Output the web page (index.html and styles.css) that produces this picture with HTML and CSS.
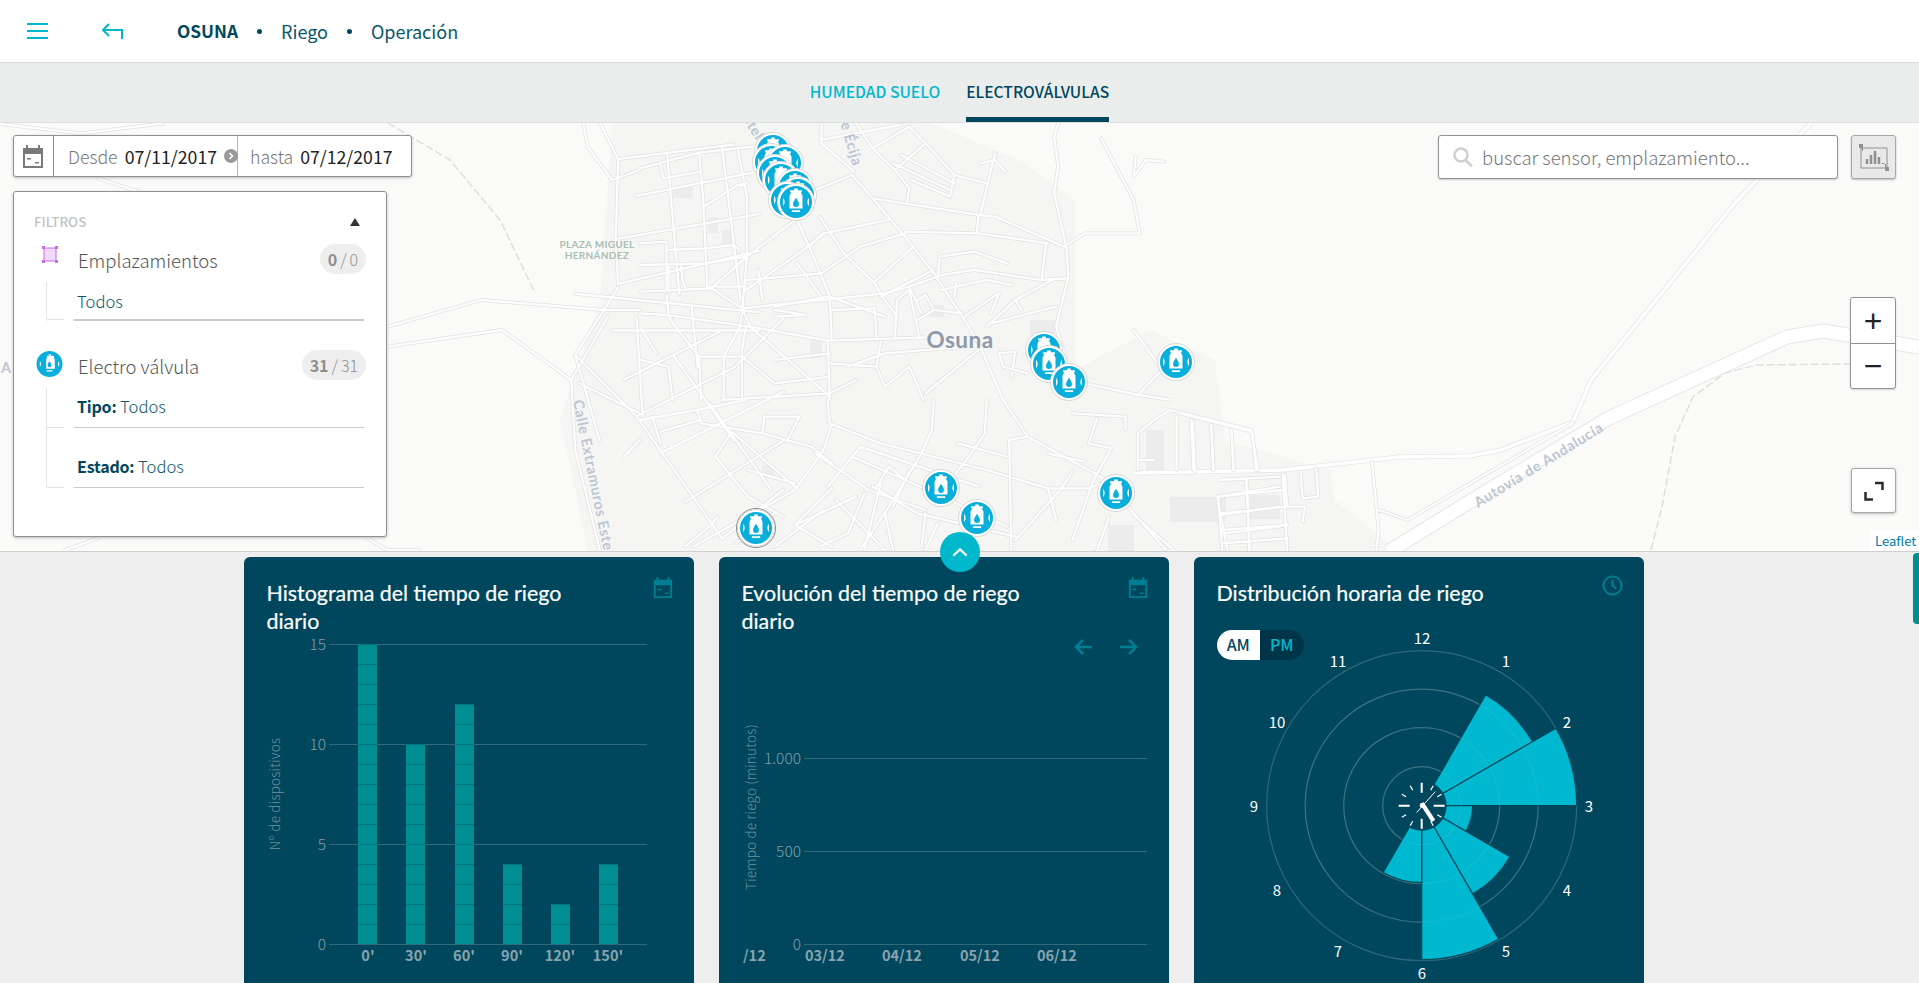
FILE: index.html
```html
<!DOCTYPE html>
<html lang="es">
<head>
<meta charset="utf-8">
<title>Osuna · Riego · Operación</title>
<link rel="stylesheet" href="styles.css">
</head>
<body>
<header class="topbar">
  <button class="menu-btn" aria-label="Menú"><i></i><i></i><i></i></button>
  <svg class="back-icon" viewBox="102 22 21 18"><path d="M109 24L103 30L109 36M103 30H122V39"/></svg>
  <nav class="crumbs">
    <b>OSUNA</b><i class="dot"></i><span>Riego</span><i class="dot"></i><span>Operación</span>
  </nav>
</header>
<div class="tabs">
  <a class="tab">HUMEDAD SUELO</a>
  <a class="tab tab-active">ELECTROVÁLVULAS</a>
</div>

<section class="map">
  <svg class="map-canvas" viewBox="0 123 1919 428" preserveAspectRatio="none">
    <defs>
      <g id="roads">
        <g transform="translate(640 100) scale(.408 .3333)">
          <path d="M0 205L145 158L290 138M145 158L155 300L160 435L165 560M50 195L58 235L148 215M240 150L262 290L262 470L250 640L245 680L205 770L205 900M155 320L240 255L262 250M262 470L380 360M262 470L175 565L0 575M175 565L250 625L270 680L460 722L700 712M0 640L65 645L270 680M65 585L70 645L80 670L145 770L150 900M0 430L65 425L65 570M0 495L160 490M65 450L160 445L230 435L262 470M100 495L105 545L115 570M260 570L390 460L450 400M250 625L450 600L600 580L660 560L740 525L820 510L980 540L1045 535"/>
          <path d="M385 360L415 440L465 590L470 720M440 350L500 460L575 550L600 600M415 440L450 400L610 360M445 520L540 440L650 400M575 545L670 440M590 590L720 510M430 270L520 225L570 295L650 410L720 520L790 650L830 730L890 900M445 70L445 130L525 215M530 70L570 145L625 210L660 265L655 305M445 120L570 90L640 75M625 210L700 130L770 225L760 290L665 240M570 145L660 80L700 130M570 295L830 345L870 350L1040 440M650 395L830 400L1000 430M830 345L825 400M870 160L835 340M835 190L870 180L895 215M770 225L850 250M620 190L760 270M640 165L770 250"/>
          <path d="M1025 70L1015 110L1025 200L1015 280L1045 440L1050 530L1020 680L1050 800M1040 440L1090 400L1225 400L1210 300L1130 115M1215 170L1210 230L1240 180L1285 185M735 470L820 455L900 490M735 470L730 530M995 430L985 535M740 570L850 540L910 555M775 550L770 590M630 600L660 570L685 715M630 600L625 710M680 600L700 585L720 630L680 660M795 650L880 580L860 640M850 680L920 600L1010 540M920 600L935 630M860 670L1020 620M575 625L580 715M330 630L405 645L330 650M460 720L465 900M590 725L580 800L600 860L660 800L695 900M510 800L600 760L800 740M700 880L830 750M880 760L890 800L950 820M880 760L920 755L910 830M260 680L250 750L250 900M270 680L465 890M210 770L250 770M1090 850L1220 885L1280 810L1210 690M1220 885L1300 900M465 880L200 900"/>
          <path d="M160 490L262 470M262 540L445 520M70 500L70 570M165 560L260 560M330 620L460 590M465 590L600 650M470 630L575 625M600 600L630 650M720 630L790 640M660 560L690 640M385 490L450 600M300 600L290 510M0 680L40 760M145 770L205 770M250 770L330 850M330 780L465 760M465 790L580 800M330 850L465 830M0 780L70 800M70 800L80 900M530 840L465 880M1000 800L1090 850"/>
        </g>
        <g transform="translate(640 400) scale(.408 .3333)">
          <path d="M30 50L50 130M50 95L150 60M0 60L140 30L260 0M140 30L150 70L300 100L420 140L470 190M300 100L305 50L390 50L360 125M225 95L185 170L265 290L350 350M265 210L380 250M225 95L380 260M460 0L465 70L590 130L850 210L1000 265L1100 265L1130 250M470 70L450 150L380 270L130 440M540 140L520 170L650 240L900 380M540 140L830 260M720 0L715 90L690 160L610 320L540 450M850 0L845 100L800 180L760 240M905 120L910 450"/>
          <path d="M470 265L380 375L530 290M550 280L510 400L440 440M570 260L680 340L920 410M890 0L950 110L1130 230L1290 450M1120 55L1100 130L1155 145L1110 245L1060 420M1060 40L1190 50L1190 90M1060 215L1030 270L920 420M1260 60L1220 100L1220 210M1260 60L1300 30L1500 90L1510 210M1315 50L1315 210M1355 65L1360 215M1400 80L1405 210M1450 100L1455 210M1220 180L1260 180M1420 240L1568 230M1415 290L1568 260M1415 290L1440 453M1485 240L1495 453M1420 345L1568 320M1430 400L1568 380M1210 345L1310 453M1120 453L1150 350M610 200L580 260M590 250L550 450M730 370L700 450M110 440L170 380L190 350"/>
          <path d="M430 160L560 270L700 330M520 170L460 260M610 200L650 240M660 215L620 320M780 130L900 170M1000 160L1090 185M950 110L905 120M1000 265L1020 360M700 340L690 440M800 370L790 450M600 340L620 450M480 300L560 400L600 450M380 375L470 440M330 440L450 330M235 430L330 340M1180 240L1190 290"/>
        </g>
        <g transform="translate(1180 330) scale(.4464 .3333)">
          <path d="M430 395L445 600L440 660M445 540L510 570L880 280M150 450L155 660M230 430L240 660M85 500L230 480M90 550L240 530M95 600L240 585M95 640L240 625M85 500L95 660M270 425L275 505L310 500L305 415M0 250L160 305L175 420M25 270L30 420M70 285L75 420M115 300L120 420M235 435L240 530L280 530L275 575"/>
        </g>
        <g transform="scale(.408 .3333)">
          <path d="M0 372L200 400L400 370M240 535L340 575M1430 370L1440 440L1500 540M1500 540L1568 510"/>
        </g>
        <g transform="translate(0 300) scale(.408 .3333)">
          <path d="M950 80L1180 0L1480 30L1568 30M950 140L1230 90L1400 240L1490 50M1400 240L1410 450L1470 750M1420 250L1568 340M240 715L160 750M900 715L950 750L1025 750M1530 470L1568 420"/>
        </g>
        <g transform="scale(1.224)">
          <path d="M505 130L503 195L505 232M505 130L600 118M520 160L620 140M505 195L620 175M545 125L555 240M590 120L605 245M505 232L620 205M470 240L620 255M470 290L505 235M470 290L520 340L590 440M470 290L490 360M520 340L600 300L640 260M540 370L640 320M560 410L640 360M590 440L640 400M525 340L520 260M570 300L565 250M490 100L505 130M500 270L620 270M510 310L590 270M550 290L600 360M580 330L630 400"/>
        </g>
      </g>
      <path id="arterial" d="M1134 473L1283 470L1399 457L1470 456L1501 450L1573 422L1591 380L1735 203L1811 123"/>
      <path id="motorway" d="M1388 552L1492 488L1609 418L1787 337L1823 331L1919 347"/>
      <symbol id="valve" viewBox="-19 -20 38 40" overflow="visible">
        <circle r="18.500" class="valve-rim"/>
        <circle r="16" class="valve-disc"/>
        <g transform="scale(1.18)">
          <g class="valve-glyph">
            <path d="M-1.500 -11.500h3v1.500h3.500v1.800h-1l1.500 3v10.700h-11v-10.700l1.500-3h-1v-1.800h3.500z"/>
            <rect x="-3.500" y="7" width="7" height="1.500"/>
            <path d="M-11 -3.500a5 5 0 0 1 0 7zM11 -3.500a5 5 0 0 0 0 7z"/>
          </g>
          <path class="valve-drop" d="M0-3.500c1.300 2.200 2.500 3.700 2.500 5.200a2.500 2.500 0 0 1-5 0c0-1.500 1.200-3 2.500-5.200z"/>
        </g>
      </symbol>
    </defs>
    <rect x="0" y="123" width="1919" height="428" class="map-bg"/>
    <path class="map-urban" d="M612 123L930 123L1020 160L1075 200L1075 370L1150 330L1215 360L1225 440L1330 470L1335 500L1410 560L590 560L560 420L600 300z"/>
    <g class="map-blocks">
      <rect x="673" y="187" width="20" height="11"/><rect x="722" y="230" width="10" height="16"/><rect x="708" y="217" width="10" height="16"/><rect x="930" y="305" width="14" height="12"/><rect x="810" y="340" width="12" height="18"/><rect x="1030" y="320" width="25" height="25"/><rect x="1250" y="495" width="30" height="24"/><rect x="1170" y="497" width="56" height="25"/><rect x="1146" y="430" width="18" height="40"/><rect x="1108" y="525" width="26" height="26"/><rect x="762" y="465" width="12" height="12"/>
    </g>
    <path class="road-rail" d="M388 123L450 160L500 220L535 293M1651 550L1662 507L1675 437L1693 397L1725 373L1756 365L1850 364"/>
    <use href="#motorway" class="motorway-casing"/>
    <use href="#motorway" class="motorway-inner"/>
    <use href="#arterial" class="arterial-casing"/>
    <use href="#arterial" class="arterial-inner"/>
    <use href="#roads" class="roads-casing"/>
    <use href="#roads" class="roads-inner"/>
    <text x="960" y="348" class="lbl-town">Osuna</text>
    <text x="597" y="248" class="lbl-park">PLAZA MIGUEL</text>
    <text x="597" y="259" class="lbl-park">HERNÁNDEZ</text>
    <text transform="translate(573 401) rotate(78.500)" class="lbl-road">Calle Extramuros Este</text>
    <text transform="translate(1478 508) rotate(-31.500)" class="lbl-road">Autovía de Andalucía</text>
    <text transform="translate(838 115) rotate(74)" class="lbl-road">de Écija</text>
    <text transform="translate(738 112) rotate(58)" class="lbl-road">Estela</text>
    <text x="1" y="373" class="lbl-road">A</text>
    <use href="#valve" x="754" y="131" width="38" height="40"/>
    <use href="#valve" x="752" y="142" width="38" height="40"/>
    <use href="#valve" x="766" y="143" width="38" height="40"/>
    <use href="#valve" x="756" y="153" width="38" height="40"/>
    <use href="#valve" x="762" y="160" width="38" height="40"/>
    <use href="#valve" x="776" y="167" width="38" height="40"/>
    <use href="#valve" x="779" y="175" width="38" height="40"/>
    <use href="#valve" x="768" y="180" width="38" height="40"/>
    <use href="#valve" x="777" y="182" width="38" height="40"/>
    <use href="#valve" x="1025" y="330" width="38" height="40"/>
    <use href="#valve" x="1030" y="344" width="38" height="40"/>
    <use href="#valve" x="1050" y="362" width="38" height="40"/>
    <use href="#valve" x="1157" y="342" width="38" height="40"/>
    <use href="#valve" x="922" y="468" width="38" height="40"/>
    <use href="#valve" x="958" y="498" width="38" height="40"/>
    <use href="#valve" x="1097" y="473" width="38" height="40"/>
    <circle cx="756" cy="528" r="19.500" class="valve-outline"/>
    <use href="#valve" x="737" y="508" width="38" height="40"/>
  </svg>

  <div class="range">
    <span class="range-icon">
      <svg viewBox="0 0 24 24"><path fill-rule="evenodd" d="M2 4h3V1h2v3h10V1h2v3h3v20H2zM4 10v12h16V10zM6 14h4v1.500H6zM14 18h4v1.500h-4z"/></svg>
    </span>
    <span class="range-cell range-from"><em>Desde</em>07/11/2017<i class="range-arrow"><svg viewBox="0 0 14 14"><path d="M5.500 4L8.500 7L5.500 10"/></svg></i></span>
    <span class="range-cell"><em>hasta</em>07/12/2017</span>
  </div>

  <aside class="filters">
    <div class="filters-head"><span>FILTROS</span><i class="tri"></i></div>
    <div class="f-row">
      <span class="f-icon">
        <svg class="poly-icon" viewBox="0 0 16 17"><rect x="2" y="2" width="12" height="13"/><path d="M0 0h3v3H0zM13 0h3v3h-3zM0 14h3v3H0zM13 14h3v3h-3z"/></svg>
      </span>
      <span class="f-name">Emplazamientos</span>
      <span class="badge"><b>0</b><s>/</s>0</span>
    </div>
    <div class="f-sub">
      <div class="f-item f-item-strong">Todos</div>
    </div>
    <div class="f-row f-row-gap">
      <span class="f-icon">
        <svg class="valve-mini" viewBox="-14 -14 28 28"><circle r="13.500" class="valve-disc"/><g class="valve-glyph"><path d="M-1.500 -10h3v1.500h3v1.500l1 2.500v9.500h-9v-9.500l1-2.500v-1.500h3z"/><rect x="-3" y="6.500" width="6" height="1.300"/><path d="M-10 -3a4.500 4.500 0 0 1 0 6zM10 -3a4.500 4.500 0 0 0 0 6z"/></g><path class="valve-drop" d="M0-3c1 1.800 2 3 2 4.300a2 2 0 0 1-4 0c0-1.300 1-2.500 2-4.300z"/></svg>
      </span>
      <span class="f-name">Electro válvula</span>
      <span class="badge"><b>31</b><s>/</s>31</span>
    </div>
    <div class="f-sub">
      <div class="f-item"><b>Tipo:</b> Todos</div>
      <div class="f-item"><b>Estado:</b> Todos</div>
    </div>
  </aside>

  <div class="search">
    <svg class="search-icon" viewBox="0 0 20 20"><circle cx="8" cy="8" r="6.500"/><path d="M12.500 13L19 19.500"/></svg>
    <span>buscar sensor, emplazamiento...</span>
  </div>
  <button class="tool-btn" aria-label="Gráficas">
    <svg viewBox="0 0 30 27"><path class="tool-frame" d="M2 4H28V24H2z"/><path class="tool-bars" d="M8 20V15M12 20V11M16 20V7M20 20V13M24 20V19"/><path class="tool-tips" d="M0 0h4v7H3V4H0zM30 27h-4v-7h1v3h3z"/></svg>
  </button>
  <div class="zoom-ctrl">
    <button>+</button>
    <button>−</button>
  </div>
  <button class="expand-btn" aria-label="Pantalla completa">
    <svg viewBox="0 0 20 20"><path d="M11 2H18.500V9M1.500 11V18.500H9"/></svg>
  </button>
  <a class="leaflet">Leaflet</a>
  <button class="collapse-btn" aria-label="Plegar">
    <svg viewBox="0 0 18 10"><path d="M1.500 8.500L9 1.500L16.500 8.500"/></svg>
  </button>
</section>

<main class="board">
  <article class="card">
    <div class="card-head">
      <h2>Histograma del tiempo de riego diario</h2>
      <svg class="card-icon" viewBox="0 0 24 24"><path fill-rule="evenodd" d="M2 4h3V1h2v3h10V1h2v3h3v20H2zM4 10v12h16V10zM6 14h4v1.500H6zM14 18h4v1.500h-4z"/></svg>
    </div>
    <svg class="chart" viewBox="244 637 450 346">
      <defs>
        <pattern id="units" patternUnits="userSpaceOnUse" x="0" y="644" width="10" height="20">
          <rect width="10" height="20" class="bar-fill"/><rect width="10" height="1" class="bar-unit"/>
        </pattern>
      </defs>
      <g class="grid">
        <path d="M329 644.500H647M329 744.500H647M329 844.500H647M329 944.500H647"/>
      </g>
      <g class="axis-y">
        <text x="326" y="650">15</text><text x="326" y="750">10</text><text x="326" y="850">5</text><text x="326" y="950">0</text>
      </g>
      <g class="bars" fill="url(#units)">
        <rect x="358" y="644" width="19" height="300"/>
        <rect x="406" y="744" width="19" height="200"/>
        <rect x="455" y="704" width="19" height="240"/>
        <rect x="503" y="864" width="19" height="80"/>
        <rect x="551" y="904" width="19" height="40"/>
        <rect x="599" y="864" width="19" height="80"/>
      </g>
      <g class="axis-x">
        <text x="368" y="961">0'</text><text x="416" y="961">30'</text><text x="464" y="961">60'</text><text x="512" y="961">90'</text><text x="560" y="961">120'</text><text x="608" y="961">150'</text>
      </g>
      <text class="axis-title" transform="translate(280 794) rotate(-90)">Nº de dispositivos</text>
      <text class="axis-title" x="480" y="995">Tiempo de riego</text>
    </svg>
  </article>

  <article class="card">
    <div class="card-head">
      <h2>Evolución del tiempo de riego diario</h2>
      <svg class="card-icon" viewBox="0 0 24 24"><path fill-rule="evenodd" d="M2 4h3V1h2v3h10V1h2v3h3v20H2zM4 10v12h16V10zM6 14h4v1.500H6zM14 18h4v1.500h-4z"/></svg>
    </div>
    <svg class="chart" viewBox="719 637 450 346">
      <g class="grid"><path d="M804 758.500H1147M804 851.500H1147M804 944.500H1147"/></g>
      <g class="axis-y">
        <text x="801" y="764">1.000</text><text x="801" y="857">500</text><text x="801" y="950">0</text>
      </g>
      <g class="axis-x axis-x-start">
        <text x="743" y="961">/12</text><text x="805" y="961">03/12</text><text x="882" y="961">04/12</text><text x="960" y="961">05/12</text><text x="1037" y="961">06/12</text>
      </g>
      <text class="axis-title" transform="translate(756 807) rotate(-90)">Tiempo de riego (minutos)</text>
      <path class="nav-arrow" d="M1092 647H1077M1083 640L1076 647L1083 654M1120 647H1135M1129 640L1136 647L1129 654"/>
    </svg>
  </article>

  <article class="card">
    <div class="card-head">
      <h2>Distribución horaria de riego</h2>
      <svg class="card-icon card-icon-clock" viewBox="0 0 22 22"><circle cx="11" cy="11" r="9.500"/><path d="M11 5V11.500L15 14"/></svg>
      <div class="ampm"><span class="ampm-on">AM</span><span>PM</span></div>
    </div>
    <svg class="chart" viewBox="1194 637 450 346">
      <g transform="translate(1421.700 805.700)">
        <g class="rings">
          <circle r="155"/><circle r="116.500"/><circle r="78"/><circle r="39"/>
        </g>
        <g class="wedges">
          <path d="M0 0L64 -110.900A128 128 0 0 1 110.900 -64Z"/>
          <path d="M0 0L134.200 -77.500A155 155 0 0 1 155 0Z"/>
          <path d="M0 0L51 0A51 51 0 0 1 44.200 25.500Z"/>
          <path d="M0 0L88.300 51A102 102 0 0 1 51 88.300Z"/>
          <path d="M0 0L77 133.400A154 154 0 0 1 0 154Z"/>
          <path d="M0 0L0 77A77 77 0 0 1 -38.500 66.700Z"/>
        </g>
        <g class="rings-over">
          <circle r="116.500"/><circle r="78"/><circle r="39"/>
        </g>
        <circle r="25" class="hub"/>
        <g class="ticks-major"><path d="M0 -23V-13M23 0H12M0 23V13M-23 0H-12"/></g>
        <g class="ticks-minor"><path d="M11.500 -19.900L9 -15.600M19.900 -11.500L15.600 -9M19.900 11.500L15.600 9M11.500 19.900L9 15.600M-11.500 19.900L-9 15.600M-19.900 11.500L-15.600 9M-19.900 -11.500L-15.600 -9M-11.500 -19.900L-9 -15.600"/></g>
        <path class="hand-thin" d="M-5 6.700L13.500 -14"/>
        <path class="hand-thick" d="M-2 -2L2 -3.500L13.500 14L10 16.500Z"/>
        <circle r="2" class="hand-pin"/>
      </g>
      <g class="hours">
        <text x="1422" y="637">12</text><text x="1506" y="660">1</text><text x="1567" y="721">2</text><text x="1589" y="805">3</text><text x="1567" y="889">4</text><text x="1506" y="950">5</text><text x="1422" y="972">6</text><text x="1338" y="950">7</text><text x="1277" y="889">8</text><text x="1254" y="805">9</text><text x="1277" y="721">10</text><text x="1338" y="660">11</text>
      </g>
    </svg>
  </article>
  <span class="side-thumb"></span>
</main>
</body>
</html>
```

FILE: styles.css
```css
* { box-sizing: border-box; }
html, body { margin: 0; height: 983px; overflow: hidden; }
body {
  font-family: "Noto Sans CJK SC", "Source Sans Pro", "Noto Sans", sans-serif;
  color: #00475d;
  background: #eeeeee;
}
button { font: inherit; padding: 0; border: 0; background: none; color: inherit; }

/* top bar */
.topbar {
  display: flex; align-items: center; height: 63px;
  padding: 0 0 0 27px;
  background: #fff; border-bottom: 1px solid #dcdede;
}
.menu-btn { display: flex; flex-direction: column; gap: 5px; width: 21px; }
.menu-btn i { display: block; height: 2px; background: #00b8cc; }
.back-icon { width: 21px; height: 18px; margin-left: 54px; fill: none; stroke: #00b8cc; stroke-width: 2; }
.crumbs { display: flex; align-items: center; margin-left: 54px; font-size: 18px; line-height: 26px; color: #0a566c; }
.crumbs b { font-size: 17.300px; font-weight: 700; color: #00475d; }
.crumbs .dot { width: 5px; height: 5px; margin: 0 19px; border-radius: 50%; background: #00475d; }

/* tabs */
.tabs {
  display: flex; justify-content: center; gap: 26px; height: 60px;
  background: #ebeded; border-bottom: 1px solid #dcdee0;
}
.tab {
  display: block; height: 59px; padding-top: 15px;
  font-size: 15.600px; line-height: 26px; font-weight: 500; color: #00b8cc;
}
.tab-active { color: #00475d; border-bottom: 5px solid #00475d; }

/* map */
.map { position: relative; height: 429px; border-bottom: 1px solid #cfcfcf; }
.map-canvas { position: absolute; inset: 0; width: 100%; height: 428px; display: block; }
.map-bg { fill: #fafaf8; }
.map-urban { fill: #f5f5f4; }
.map-blocks rect { fill: #ececec; }
#roads { fill: none; stroke-linejoin: round; stroke-linecap: round; }
#roads path { vector-effect: non-scaling-stroke; }
#arterial, #motorway { fill: none; stroke-linejoin: round; }
.roads-casing { stroke: #e2e2e2; stroke-width: 3.800; fill: none; }
.roads-inner { stroke: #fdfdfd; stroke-width: 2.300; fill: none; }
.motorway-casing { stroke: #e6e6e6; stroke-width: 15; }
.motorway-inner { stroke: #ffffff; stroke-width: 13; }
.arterial-casing { stroke: #e6e6e6; stroke-width: 5; }
.arterial-inner { stroke: #ffffff; stroke-width: 3.400; }
.road-rail { fill: none; stroke: #dedede; stroke-width: 1.500; stroke-dasharray: 8 3; }
.lbl-town { font: 700 22.500px "Lato", sans-serif; fill: #8e9aab; text-anchor: middle; letter-spacing: .5px; }
.lbl-park { font: 700 10px "Lato", sans-serif; fill: #a9c0b0; text-anchor: middle; letter-spacing: .3px; }
.lbl-road { font: 700 14.500px "Lato", sans-serif; fill: #bdc6d2; letter-spacing: .6px; }
.valve-rim { fill: #fff; stroke: #d9d9d9; stroke-width: 1; }
.valve-disc { fill: #09aedb; }
.valve-glyph { fill: #fff; }
.valve-drop { fill: #09aedb; }
.valve-outline { fill: none; stroke: #8a8a8a; stroke-width: 1; }

/* date range */
.range {
  position: absolute; top: 12px; left: 13px; display: flex; align-items: stretch;
  width: 399px; height: 42px; background: #fff;
  border: 1px solid #8f9396; border-radius: 3px; box-shadow: 0 1px 3px rgba(0,0,0,.25);
  font-size: 17.700px; line-height: 40px; color: #222;
}
.range-icon { display: flex; align-items: center; justify-content: center; width: 40px; border-right: 1px solid #8f9396; }
.range-icon svg { width: 24px; height: 24px; fill: #7a7a7a; margin-left: -1px; }
.range-cell { display: flex; padding-left: 12px; white-space: nowrap; }
.range-cell em { font-style: normal; font-weight: 300; color: #777; margin-right: 7px; }
.range-from { position: relative; width: 184px; border-right: 1px solid #b5b5b5; padding-left: 14px; }
.range-arrow {
  position: absolute; right: -1px; top: 13px; width: 14px; height: 14px; border-radius: 50%; background: #9a9a9a;
}
.range-arrow svg { display: block; width: 14px; height: 14px; fill: none; stroke: #fff; stroke-width: 1.500; }

/* filters */
.filters {
  position: absolute; top: 68px; left: 13px; width: 374px; height: 346px;
  padding: 19px 20px 0 22px; background: #fff;
  border: 1px solid #8f9396; border-radius: 3px; box-shadow: 0 1px 3px rgba(0,0,0,.25);
}
.filters-head {
  display: flex; justify-content: space-between; align-items: center; height: 21px; margin-left: -2px;
  font-size: 13.300px; line-height: 16px; font-weight: 500; color: #bfc4c7;
}
.tri { width: 0; height: 0; margin-right: 6px; border: 5px solid transparent; border-top: 0; border-bottom: 8px solid #333; }
.f-row { display: flex; align-items: center; height: 30px; margin-top: 12px; }
.f-row-gap { margin-top: 29px; }
.f-icon { display: flex; align-items: center; width: 42px; }
.poly-icon { width: 16px; height: 17px; margin-left: 6px; margin-top: -10px; }
.poly-icon rect { fill: #f1d9fb; stroke: #c66be8; stroke-width: 1; }
.poly-icon path { fill: #c66be8; }
.valve-mini { width: 27px; height: 28px; margin-top: -2px; }
.f-name { flex: 1; font-size: 18.500px; font-weight: 300; line-height: 26px; color: #555; margin-top: 2px; }
.badge {
  height: 30px; padding: 0 8px; border-radius: 15px; background: #eeeeee;
  font-size: 16px; line-height: 30px; color: #8e8e8e; font-weight: 300;
}
.badge b { font-weight: 700; }
.badge s { text-decoration: none; margin: 0 3px; }
.f-sub { margin: 8px 2px 0 10px; padding-left: 27px; border-left: 1px solid #e3e3e3; }
.f-item {
  position: relative; height: 39px; padding: 5px 0 0 3px;
  font-size: 16.600px; line-height: 26px; color: #0a566c; font-weight: 300;
  border-bottom: 1px solid #c9cbcc;
}
.f-item + .f-item { margin-top: 21px; height: 39px; padding-top: 4px; }
.f-sub .f-item:first-child { height: 40px; }
.f-item b { font-size: 16px; letter-spacing: -.2px; font-weight: 700; color: #00475d; }
.f-item-strong { border-bottom-width: 2px; padding-top: 6px; }
.f-sub .f-item-strong:first-child { height: 39px; }
.f-item::before {
  content: ""; position: absolute; left: -27px; bottom: -1px; width: 17px; height: 1px; background: #e3e3e3;
}

/* top right */
.search {
  position: absolute; top: 12px; left: 1438px; display: flex; align-items: center; gap: 9px;
  width: 400px; height: 44px; padding-left: 14px; background: #fff;
  border: 1px solid #8f9396; border-radius: 3px; box-shadow: 0 1px 2px rgba(0,0,0,.2);
  font-size: 18.500px; font-weight: 300; color: #777;
}
.search-icon { width: 20px; height: 20px; fill: none; stroke: #cfcfcf; stroke-width: 2.500; }
.tool-btn {
  position: absolute; top: 12px; left: 1851px; display: flex; align-items: center; justify-content: center;
  width: 45px; height: 44px; background: #e9e9e9;
  border: 1px solid #a5a8aa; border-radius: 3px; box-shadow: 0 1px 2px rgba(0,0,0,.25);
}
.tool-btn svg { width: 30px; height: 27px; }
.tool-frame { fill: none; stroke: #8f8f8f; stroke-width: 1; }
.tool-bars { fill: none; stroke: #8f8f8f; stroke-width: 2.500; }
.tool-tips { fill: #8f8f8f; }
.zoom-ctrl {
  position: absolute; top: 174px; left: 1850px; width: 46px; height: 92px; background: #fff;
  border: 1px solid #8f9396; border-radius: 3px; box-shadow: 0 1px 2px rgba(0,0,0,.15);
}
.zoom-ctrl button {
  display: block; width: 100%; height: 45px; font: 400 32px/40px "Liberation Sans", sans-serif; color: #222;
}
.zoom-ctrl button + button { border-top: 1px solid #8f9396; }
.expand-btn {
  position: absolute; top: 345px; left: 1851px; display: flex; align-items: center; justify-content: center;
  width: 45px; height: 45px; background: #fff;
  border: 1px solid #a5a8aa; border-radius: 3px; box-shadow: 0 1px 3px rgba(0,0,0,.25);
}
.expand-btn svg { width: 20px; height: 20px; fill: none; stroke: #2a2a33; stroke-width: 2.500; }
.leaflet {
  position: absolute; right: 0; bottom: 0; width: 50px; height: 21px; padding-left: 6px;
  background: rgba(255,255,255,.8); font-size: 13px; line-height: 21px; color: #0078a8;
}
.collapse-btn {
  position: absolute; left: 940px; bottom: -21px; z-index: 3; display: flex; align-items: center; justify-content: center;
  width: 40px; height: 40px; border-radius: 50%; background: #00b8cc;
}
.collapse-btn svg { width: 16px; height: 9px; fill: none; stroke: #fff; stroke-width: 2.500; }

/* cards */
.board { position: relative; display: flex; gap: 25px; height: 431px; padding: 5px 0 0 244px; overflow: hidden; }
.card { flex: none; width: 450px; height: 440px; background: #00475d; border-radius: 6px 6px 0 0; color: #fff; }
.card-head { position: relative; display: flex; height: 80px; padding: 22px 21px 0 22.500px; justify-content: space-between; flex-wrap: wrap; align-content: flex-start; }
.card-head h2 {
  width: 320px; margin: 0; font: 400 21.400px/28px "Lato", sans-serif; color: #fff;
  -webkit-text-stroke: .2px #fff;
}
.card-icon { width: 22px; height: 22px; margin: -3px -1px 0 0; fill: #007f92; }
.card-icon-clock { width: 21px; height: 21px; margin: -4px 0 0 0; fill: none; stroke: #007f92; stroke-width: 2; }
.ampm { position: relative; z-index: 1; display: flex; width: 87px; height: 30px; margin-top: 23px; border-radius: 15px; overflow: hidden; background: #003549; font-size: 16px; line-height: 28px; font-weight: 500; color: #00b8cc; }
.ampm span { flex: 1; text-align: center; }
.ampm-on { background: #fff; color: #00475d; }
.chart { display: block; width: 450px; height: 346px; overflow: visible; }
.grid path { fill: none; stroke: #2f6a7d; stroke-width: 1; }
.axis-y text { font-size: 15.500px; font-weight: 300; fill: #7f9eaa; text-anchor: end; }
.axis-x text { font-size: 14.500px; font-weight: 700; fill: #88a3ad; text-anchor: middle; }
.axis-x-start text { text-anchor: start; }
.axis-title { font-size: 13.500px; font-weight: 300; fill: #6f919e; text-anchor: middle; letter-spacing: .2px; }
.bar-fill { fill: #008e90; }
.bar-unit { fill: #00737e; }
.nav-arrow { fill: none; stroke: #007f92; stroke-width: 2.500; }
.rings circle, .rings-over circle { fill: none; stroke: #fff; stroke-opacity: .18; stroke-width: 1.200; }
.rings-over circle { stroke-opacity: .07; }
.wedges path { fill: #00b8cf; stroke: #00475d; stroke-width: 1.200; }
.hub { fill: #00475d; }
.ticks-major path { fill: none; stroke: #fff; stroke-width: 2; }
.ticks-minor path { fill: none; stroke: #fff; stroke-width: 1.200; }
.hand-thin { fill: none; stroke: #fff; stroke-width: 1; }
.hand-thick, .hand-pin { fill: #fff; }
.hours text { font-size: 15px; fill: #fff; text-anchor: middle; dominant-baseline: central; }
.side-thumb { position: absolute; top: 1px; right: 0; width: 6px; height: 71px; border-radius: 4px 0 0 4px; background: #008e90; }
```
